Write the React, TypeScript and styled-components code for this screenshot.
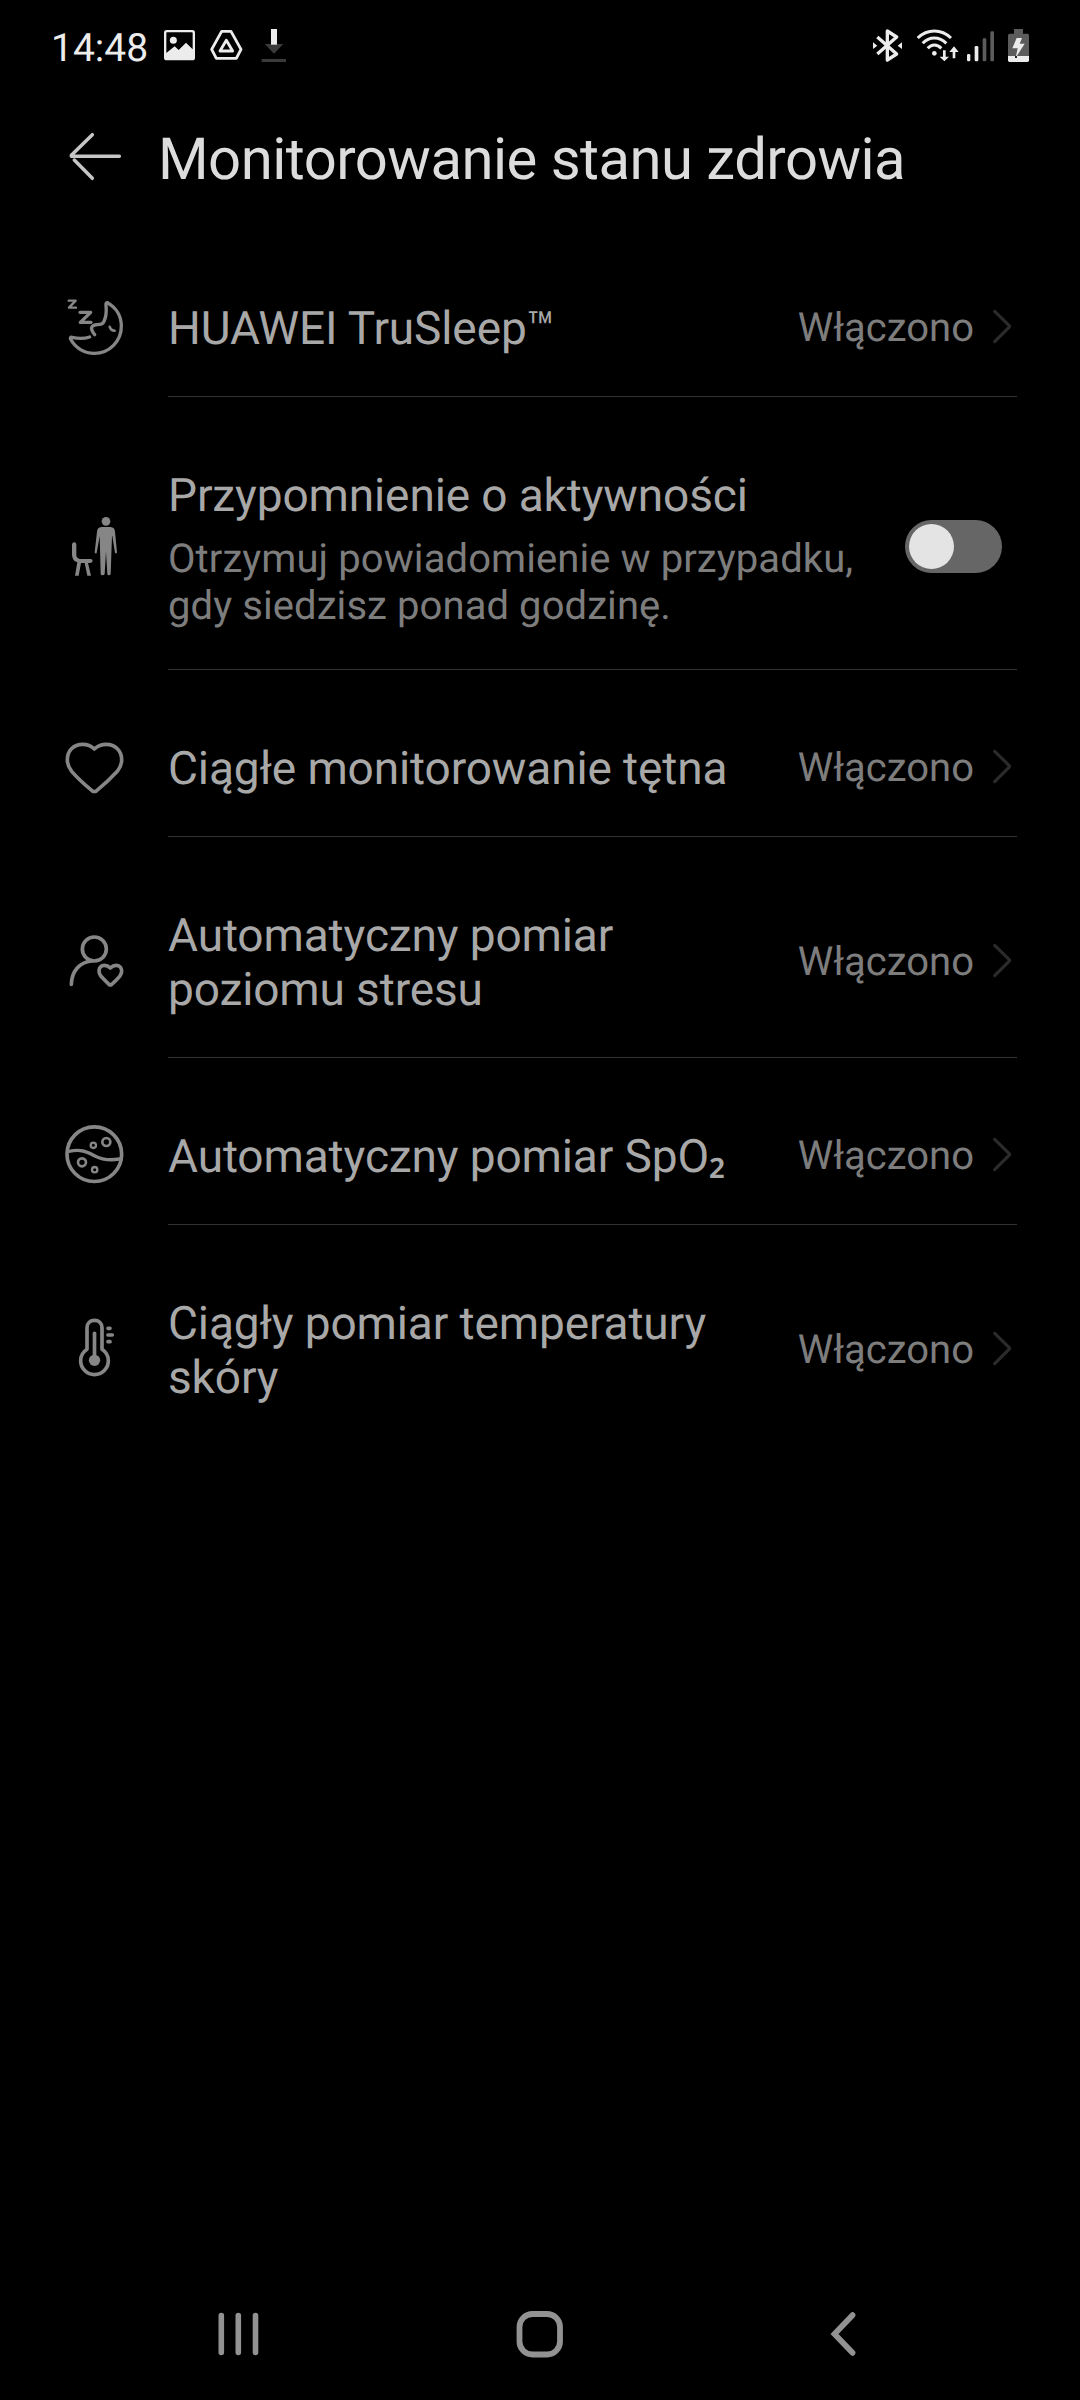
import React from "react";
import styled, { createGlobalStyle } from "styled-components";

const GlobalStyle = createGlobalStyle`
  body { margin: 0; background: #000; }
  * { box-sizing: border-box; }
`;

const Screen = styled.div`
  width: 1080px;
  height: 2400px;
  display: flex;
  flex-direction: column;
  background: #000;
  color: #a6a6a6;
  font-family: Roboto, "Noto Sans", sans-serif;
  text-rendering: geometricPrecision;
  overflow: hidden;
`;

const StatusBar = styled.header`
  height: 92px;
  padding: 28px 50px 0 51px;
  display: flex;
  justify-content: space-between;
  align-items: flex-start;
  color: #ececec;
`;

const StatusGroup = styled.div`
  display: flex;
  align-items: flex-start;
`;

const Clock = styled.span`
  width: 113px;
  font-size: 39px;
  line-height: 41px;
  white-space: nowrap;
`;

const StatusGlyph = styled.svg<{ $w: number; $gap: number }>`
  display: block;
  width: ${(p) => p.$w}px;
  height: 35px;
  margin-left: ${(p) => p.$gap}px;
`;

const TitleBar = styled.div`
  height: 138px;
  padding: 33px 0 0 66px;
  display: flex;
  align-items: flex-start;
`;

const BackButton = styled.button`
  width: 92px;
  height: 64px;
  padding: 0;
  border: 0;
  background: none;
`;

const BackArrow = styled.svg`
  display: block;
  width: 60px;
  height: 64px;
`;

const Title = styled.h1`
  margin: 0;
  font-size: 58px;
  line-height: 70px;
  font-weight: 400;
  letter-spacing: -0.52px;
  color: #dcdcdc;
  white-space: nowrap;
`;

const List = styled.main`
  flex: 1;
`;

const Row = styled.section`
  display: flex;
  padding-left: 60px;
  padding-right: 63px;
`;

const RowIcon = styled.svg`
  display: block;
  flex: none;
  align-self: center;
  width: 70px;
  height: 69px;
  margin: 62px 38px 36px 0;
`;

const RowBody = styled.div<{ $last?: boolean }>`
  flex: 1;
  display: flex;
  align-items: center;
  padding: 68px 0 40px;
  border-bottom: 1px solid ${(p) => (p.$last ? "transparent" : "#333")};
`;

const Texts = styled.div`
  flex: 1;
  padding-top: 4px;
`;

const Label = styled.div`
  font-size: 46px;
  line-height: 54px;
  letter-spacing: -0.12px;
  color: #a8a8a8;
`;

const Subscript = styled.span`
  font-family: "Noto Sans", sans-serif;
  font-weight: 500;
  line-height: 0;
`;

const Hint = styled.div`
  margin-top: 12px;
  font-size: 40px;
  line-height: 47px;
  letter-spacing: 0.08px;
  color: #7d7d7d;
`;

const Value = styled.span`
  margin: 2px 17px 0 24px;
  font-size: 40px;
  line-height: 48px;
  color: #7d7d7d;
`;

const Chevron = styled.svg`
  display: block;
  width: 26px;
  height: 39px;
  margin-bottom: 1px;
`;

const Switch = styled.div`
  flex: none;
  display: flex;
  align-items: center;
  width: 97px;
  height: 53px;
  margin: 0 15px 1px 24px;
  padding-left: 4px;
  border-radius: 27px;
  background: #666;
`;

const Knob = styled.div`
  width: 45px;
  height: 45px;
  border-radius: 50%;
  background: #e4e4e4;
`;

const NavBar = styled.nav`
  height: 132px;
  display: flex;
  align-items: center;
  justify-content: space-between;
  padding: 0 217px 0 213px;
`;

const NavIcon = styled.svg`
  display: block;
  width: 50px;
  height: 50px;
`;

const INK = "#868686";

const stroke = (width: number, color = INK) => ({
  fill: "none",
  stroke: color,
  strokeWidth: width,
  strokeLinecap: "round" as const,
  strokeLinejoin: "round" as const,
});

const SleepIcon = () => (
  <RowIcon viewBox="30 36 210 207">
    <g {...stroke(10)}>
      <path d="M172 68C198 82 214 108 214 138A81 81 0 0 1 133 220C103 220 76 204 62 178Q59 171 66 172Q95 179 119 171" />
      <path d="M172 68Q167 68 168 76Q171 105 162 124Q158 133 149 133Q134 133 127 139Q123 144 126 151Q129 158 134 164" />
      <path d="M179 140Q182 152 194 152" strokeWidth={7.5} />
      <path d="M90 97H122L91 127H123" />
      <path d="M56 62H77L57 83H78" strokeWidth={7} />
    </g>
  </RowIcon>
);

const StandIcon = () => (
  <RowIcon viewBox="30 156 210 207">
    <g fill={INK}>
      <circle cx="168" cy="184" r="13" />
      <path d="M154 201H182Q194 202 195 215L201 277Q200 282 195 279L187 228H186L182 342Q181 346 177 346Q173 346 172 342L168 275L164 342Q163 346 157 346Q153 346 152 342L149 228L140 279Q136 283 134 277L141 215Q142 202 154 201Z" />
      <path d="M66 253Q67 247 73 247Q79 247 79 253V286Q80 296 90 297H123Q128 298 128 303Q128 308 121 309H114L123 347H112L104 309H93L86 347H75L82 307Q66 301 66 284Z" />
    </g>
  </RowIcon>
);

const HeartIcon = () => (
  <RowIcon viewBox="30 36 210 207">
    <path
      {...stroke(11)}
      d="M133 87Q119 73 98 73C70 73 52 93 52 119Q52 138 65 154C78 169 102 192 126 212Q133 217 140 212C165 192 188 169 202 154Q215 138 215 119C215 93 196 73 169 73Q148 73 133 87Z"
    />
  </RowIcon>
);

const StressIcon = () => (
  <RowIcon viewBox="30 618 210 207">
    <g {...stroke(11)}>
      <circle cx="133" cy="687" r="36" />
      <path d="M64 793C65 755 88 726 125 723" />
      <path d="M181 744Q173 736 163 736C153 736 147 744 147 753Q147 761 153 769Q164 781 177 793Q181 797 185 793Q199 781 209 769Q215 761 215 753C215 744 208 736 199 736Q189 736 181 744Z" />
    </g>
  </RowIcon>
);

const OxygenIcon = () => (
  <RowIcon viewBox="30 60 210 207">
    <g {...stroke(11)}>
      <circle cx="133" cy="162.500" r="82" />
      <path d="M57 154C92 147 108 154 133 167S180 182 208 177" strokeWidth={10} />
      <circle cx="169" cy="126" r="12" strokeWidth={8} />
      <circle cx="130" cy="136" r="8" strokeWidth={7} />
      <circle cx="96" cy="187" r="12" strokeWidth={8} />
      <circle cx="134" cy="209" r="8" strokeWidth={7} />
    </g>
  </RowIcon>
);

const ThermometerIcon = () => (
  <RowIcon viewBox="30 642 210 207">
    <g {...stroke(11)}>
      <path d="M111 748V683C111 669 121 661 133.500 661S156 669 156 683V748C168 756 175 768 175 782A41.500 42 0 0 1 92 782C92 768 99 756 111 748Z" />
      <path d="M133.500 700V780" />
      <path d="M174 685H180M174 705H187M174 725H180" />
    </g>
    <circle cx="133.500" cy="781" r="17" fill={INK} />
  </RowIcon>
);

type Item = {
  id: string;
  icon: React.ReactNode;
  label: React.ReactNode;
  hint?: string;
};

const items: Item[] = [
  { id: "sleep", icon: <SleepIcon />, label: "HUAWEI TruSleep™" },
  {
    id: "activity",
    icon: <StandIcon />,
    label: "Przypomnienie o aktywności",
    hint: "Otrzymuj powiadomienie w przypadku, gdy siedzisz ponad godzinę.",
  },
  { id: "heart", icon: <HeartIcon />, label: "Ciągłe monitorowanie tętna" },
  { id: "stress", icon: <StressIcon />, label: "Automatyczny pomiar poziomu stresu" },
  {
    id: "oxygen",
    icon: <OxygenIcon />,
    label: (
      <>
        Automatyczny pomiar SpO<Subscript>₂</Subscript>
      </>
    ),
  },
  { id: "temperature", icon: <ThermometerIcon />, label: "Ciągły pomiar temperatury skóry" },
];

export default function App() {
  return (
    <Screen>
      <GlobalStyle />
      <StatusBar>
        <StatusGroup>
          <Clock>14:48</Clock>
          <StatusGlyph $w={31} $gap={0} viewBox="372 54 93 105">
            <path
              fill="#ececec"
              fillRule="evenodd"
              d="M380 60H457Q465 60 465 68V143Q465 151 457 151H380Q372 151 372 143V68Q372 60 380 60ZM379 69V129L404 109L416 120L438 98L458 118V69Q458 67 456 67H381Q379 67 379 69Z"
            />
            <circle cx="400" cy="91" r="10.500" fill="#ececec" />
          </StatusGlyph>
          <StatusGlyph $w={33} $gap={15} viewBox="510 54 99 105">
            <path {...stroke(8.5, "#ececec")} d="M545 64H573L603 118L589 145H529L515 118Z" />
            <path {...stroke(8.5, "#ececec")} d="M559 91L578 123H540Z" />
          </StatusGlyph>
          <StatusGlyph $w={26} $gap={18} viewBox="663 54 78 105">
            <path fill="#3a3a3a" d="M674 102H730L702 131ZM665 147H738V156H665Z" />
            <path fill="#ececec" d="M693 57H711V104H693Z" />
          </StatusGlyph>
        </StatusGroup>
        <StatusGroup>
          <StatusGlyph $w={31} $gap={0} viewBox="66 54 93 105">
            <path
              {...stroke(10, "#ececec")}
              strokeLinecap="butt"
              d="M82 81L140 132L112 150V63L140 81L82 132"
            />
            <path fill="#ececec" d="M69 97L82 107L69 117ZM156 97L143 107L156 117Z" />
          </StatusGlyph>
          <StatusGlyph $w={43} $gap={13} viewBox="198 54 129 105">
            <g {...stroke(9, "#ececec")} strokeLinecap="butt">
              <path d="M203 84Q225 63 253 63T303 84" />
              <path d="M218 100Q233 84 253 84T289 100" />
              <path d="M233 115Q242 105 253 105T274 115" />
            </g>
            <circle cx="253" cy="130" r="7" fill="#ececec" />
            <path
              fill="#ececec"
              d="M279 121H287V140H297L283 154L269 140H279ZM308 145V126H298L312 109L326 126H316V145Z"
            />
          </StatusGlyph>
          <StatusGlyph $w={29} $gap={7} viewBox="348 54 87 105">
            <rect x="351" y="132" width="10" height="22" rx="4" fill="#ececec" />
            <rect x="374" y="108" width="11" height="46" rx="4" fill="#ececec" />
            <rect x="398" y="85" width="11" height="69" rx="4" fill="#5c5c5c" />
            <rect x="421" y="64" width="11" height="90" rx="4" fill="#5c5c5c" />
          </StatusGlyph>
          <StatusGlyph $w={23} $gap={12} viewBox="471 54 69 105">
            <path fill="#5c5c5c" d="M492 57H519V71H532Q537 71 537 76V139H474V76Q474 71 479 71H492Z" />
            <path fill="#ececec" d="M474 138H537V151Q537 156 532 156H479Q474 156 474 151Z" />
            <path fill="#ececec" d="M500 84H516L509 101H524L497 143L503 115H487Z" />
            <path fill="#222" d="M495 138H501V144H495Z" />
          </StatusGlyph>
        </StatusGroup>
      </StatusBar>

      <TitleBar>
        <BackButton aria-label="Wstecz">
          <BackArrow viewBox="48 45 180 192">
            <path {...stroke(10.5, "#c6c6c6")} d="M127 74L64 136M64 139H208M73 150L127 205" />
          </BackArrow>
        </BackButton>
        <Title>Monitorowanie stanu zdrowia</Title>
      </TitleBar>

      <List>
        {items.map((item, i) => (
          <Row key={item.id}>
            {item.icon}
            <RowBody $last={i === items.length - 1}>
              <Texts>
                <Label>{item.label}</Label>
                {item.hint && <Hint>{item.hint}</Hint>}
              </Texts>
              {item.hint ? (
                <Switch role="switch" aria-checked={false}>
                  <Knob />
                </Switch>
              ) : (
                <>
                  <Value>Włączono</Value>
                  <Chevron viewBox="633 81 78 117">
                    <path {...stroke(9.5, "#2b2b2b")} d="M644 94L687 136Q690 139 687 142L644 185" />
                  </Chevron>
                </>
              )}
            </RowBody>
          </Row>
        ))}
      </List>

      <NavBar>
        <NavIcon viewBox="0 0 50 50">
          <path {...stroke(5.6, "#929292")} d="M8.300 6.500V43.500M25.300 6.500V43.500M42.500 6.500V43.500" />
        </NavIcon>
        <NavIcon viewBox="0 0 50 50">
          <rect x="6.500" y="5" width="40.500" height="40.500" rx="13" {...stroke(5.8, "#929292")} />
        </NavIcon>
        <NavIcon viewBox="0 0 50 50">
          <path
            {...stroke(5.8, "#929292")}
            strokeLinejoin="miter"
            d="M39.500 6.200L21.500 25L39.500 43.800"
          />
        </NavIcon>
      </NavBar>
    </Screen>
  );
}
